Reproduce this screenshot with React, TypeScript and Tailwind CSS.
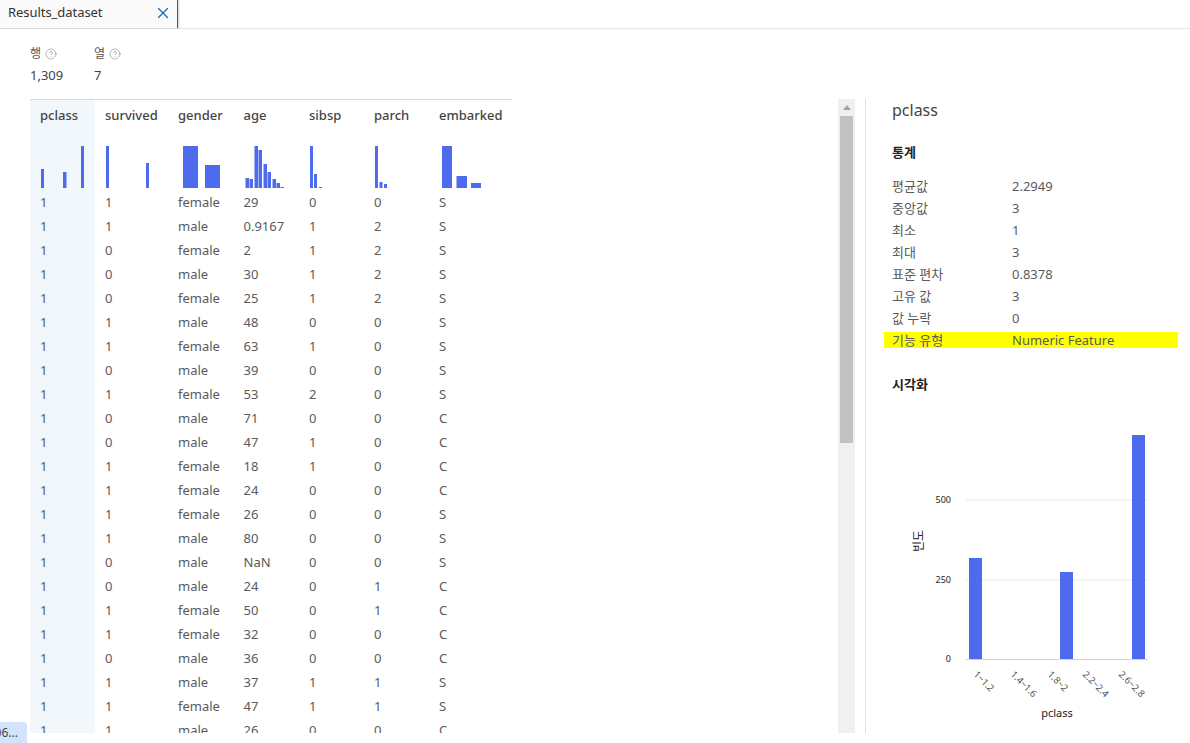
import { CircleHelp, X } from "lucide-react";

const font = "[font-family:'Noto_Sans','Noto_Sans_CJK_KR',sans-serif]";

const data: string[][] = [
  ["1","1","female","29","0","0","S"],
  ["1","1","male","0.9167","1","2","S"],
  ["1","0","female","2","1","2","S"],
  ["1","0","male","30","1","2","S"],
  ["1","0","female","25","1","2","S"],
  ["1","1","male","48","0","0","S"],
  ["1","1","female","63","1","0","S"],
  ["1","0","male","39","0","0","S"],
  ["1","1","female","53","2","0","S"],
  ["1","0","male","71","0","0","C"],
  ["1","0","male","47","1","0","C"],
  ["1","1","female","18","1","0","C"],
  ["1","1","female","24","0","0","C"],
  ["1","1","female","26","0","0","S"],
  ["1","1","male","80","0","0","S"],
  ["1","0","male","NaN","0","0","S"],
  ["1","0","male","24","0","1","C"],
  ["1","1","female","50","0","1","C"],
  ["1","1","female","32","0","0","C"],
  ["1","0","male","36","0","0","C"],
  ["1","1","male","37","1","1","S"],
  ["1","1","female","47","1","1","S"],
  ["1","1","male","26","0","0","C"],
];

// [x offset inside the column, width, top y inside a 42px box]
const columns: { name: string; w: string; bars: [number, number, number][] }[] = [
  { name: "pclass", w: "w-[65px]", bars: [[11,3,23],[33,3.5,26],[51,3,0]] },
  { name: "survived", w: "w-[73px]", bars: [[11,3,0],[51,3,17]] },
  { name: "gender", w: "w-[65.5px]", bars: [[15,15,0],[37,15,19]] },
  { name: "age", w: "w-[65.5px]", bars: [[11.5,3.5,32],[15.5,3.5,33],[20.5,3.5,0],[24.5,3.5,4],[29.5,3.5,18],[33.5,3.5,26],[38.5,3.5,33],[42.5,3.5,37],[46.5,3.5,41]] },
  { name: "sibsp", w: "w-[65px]", bars: [[11,3,0],[15,3,28],[20,3,41]] },
  { name: "parch", w: "w-[65px]", bars: [[11,3,0],[15.5,3,36],[20,3,38]] },
  { name: "embarked", w: "w-[83px]", bars: [[13,10,0],[27.5,10.5,30],[42,10,37]] },
];

const stats: [string, string][] = [
  ["평균값","2.2949"],["중앙값","3"],["최소","1"],["최대","3"],
  ["표준 편차","0.8378"],["고유 값","3"],["값 누락","0"],
];

function Spark({ bars, w }: { bars: [number, number, number][]; w: number }) {
  return (
    <svg width={w} height={42} className="block">
      {bars.map(([x, bw, y], i) => (
        <rect key={i} x={x} y={y} width={bw} height={42 - y} fill="#4f6bed" />
      ))}
    </svg>
  );
}

function Metric({ label, value, w }: { label: string; value: string; w: string }) {
  return (
    <div className={w}>
      <div className="flex items-center gap-1 h-[14px] text-[12px] text-[#555]">
        {label}
        <CircleHelp size={12} strokeWidth={1.25} color="#8a8a8a" />
      </div>
      <div className="mt-[4px] h-[20px] leading-[20px] text-[13px] text-[#444]">{value}</div>
    </div>
  );
}

function Chart() {
  const tick = ["1~1.2","1.4~1.6","1.8~2","2.2~2.4","2.6~2.8"];
  return (
    <svg width={270} height={300} viewBox="900 425 270 300" className="block mt-[31px] ml-[16px]">
      <line x1={966} x2={1148} y1={500} y2={500} stroke="#e8e8ec" />
      <line x1={966} x2={1148} y1={580} y2={580} stroke="#e8e8ec" />
      <rect x={969} y={558} width={13} height={101} fill="#4f6bed" />
      <rect x={1060} y={572} width={13} height={87} fill="#4f6bed" />
      <rect x={1132} y={435} width={13} height={224} fill="#4f6bed" />
      <line x1={966} x2={1148} y1={659.5} y2={659.5} stroke="#c8d2ea" />
      <g fontSize={9} fill="#222" textAnchor="end" fontFamily="Noto Sans">
        <text x={951} y={503}>500</text>
        <text x={951} y={583}>250</text>
        <text x={951} y={662}>0</text>
      </g>
      <text transform="translate(923 541) rotate(-90)" fontSize={12} fill="#222" textAnchor="middle" fontFamily="Noto Sans CJK KR">빈도</text>
      {tick.map((t, i) => (
        <text key={t} transform={`translate(${[973,1010,1047,1082,1118][i]} 675) rotate(45)`} fontSize={9.5} fill="#555" fontFamily="Noto Sans">{t}</text>
      ))}
      <text x={1057} y={717} fontSize={11} fill="#222" textAnchor="middle" fontFamily="Noto Sans">pclass</text>
    </svg>
  );
}

export default function App() {
  return (
    <div className={`${font} relative h-[743px] w-[1190px] overflow-hidden bg-white text-[13px] text-[#333]`}>
      <div className="h-[29px] border-b border-[#e6e6e6]">
        <div className="flex h-[28px] w-[178px] items-center justify-between border-r border-[#555] bg-[#fafafa] pb-[3px] pl-[8px] pr-[5px] text-[13px] shadow-[1px_0_2px_rgba(0,0,0,0.2)]">
          <span className="tracking-[-0.05px]">Results_dataset</span>
          <X size={18} strokeWidth={1.6} color="#0f6cbd" />
        </div>
      </div>

      <div className="flex pl-[30px] pt-[18px] h-[70px]">
        <Metric label="행" value="1,309" w="w-[64px]" />
        <Metric label="열" value="7" w="w-[64px]" />
      </div>

      <div className="flex h-[634px] pl-[30px]">
        <div className="w-[482px] shrink-0 overflow-hidden border-t border-[#d8d8d8]">
          <div className="flex">
            {columns.map((c, i) => (
              <div key={c.name} className={`${c.w} shrink-0 ${i === 0 ? "bg-[#f2f7fc]" : ""}`}>
                <div className="h-[46px] pl-[10px] pt-[5px] leading-[20px] font-medium text-[13px] text-[#444]">{c.name}</div>
                <div className="h-[42px]">
                  <Spark bars={c.bars} w={82} />
                </div>
                {data.map((r, j) => (
                  <div key={j} className="h-[24px] pl-[10px] leading-[28px] text-[13px] text-[#5a5a5a]">{r[i]}</div>
                ))}
              </div>
            ))}
          </div>
        </div>

        <div className="ml-[326px] flex w-[17px] shrink-0 flex-col bg-[#f0f0f0] px-[2px]">
          <div className="flex h-[17px] items-center justify-center">
            <div className="h-0 w-0 border-x-[4px] border-b-[5px] border-x-transparent border-b-[#a3a3a3]" />
          </div>
          <div className="h-[327px] bg-[#c1c1c1]" />
        </div>

        <div className="ml-[10px] w-[1px] shrink-0 bg-[#e0e0e0]" />

        <div className="ml-[18px] w-[294px] shrink-0">
          <div className="pl-[8px] h-[22px] leading-[22px] text-[16px] text-[#444]">pclass</div>
          <div className="pl-[8px] mt-[21px] h-[20px] leading-[20px] text-[13px] font-bold text-[#222]">통계</div>
          <div className="mt-[14px]">
            {stats.map(([k, v]) => (
              <div key={k} className="flex h-[22px] items-center pl-[8px] text-[13px] text-[#5a5a5a]">
                <span className="w-[120px]">{k}</span>
                <span>{v}</span>
              </div>
            ))}
            <div className="flex h-[16px] mt-[2px] items-center bg-[#ffff00] pl-[8px] pt-[1px] text-[13px] text-[#5a5a5a]">
              <span className="w-[120px]">기능 유형</span>
              <span>Numeric Feature</span>
            </div>
          </div>
          <div className="pl-[8px] mt-[26px] h-[20px] leading-[20px] text-[13px] font-bold text-[#222]">시각화</div>
          <Chart />
        </div>
      </div>

      <div className="absolute bottom-0 left-0 flex h-[21px] w-[27px] items-center justify-end overflow-hidden rounded-tr-[4px] bg-[#d3e3fb] pr-[9px] text-[12px] text-[#444]">
        06...
      </div>
    </div>
  );
}
